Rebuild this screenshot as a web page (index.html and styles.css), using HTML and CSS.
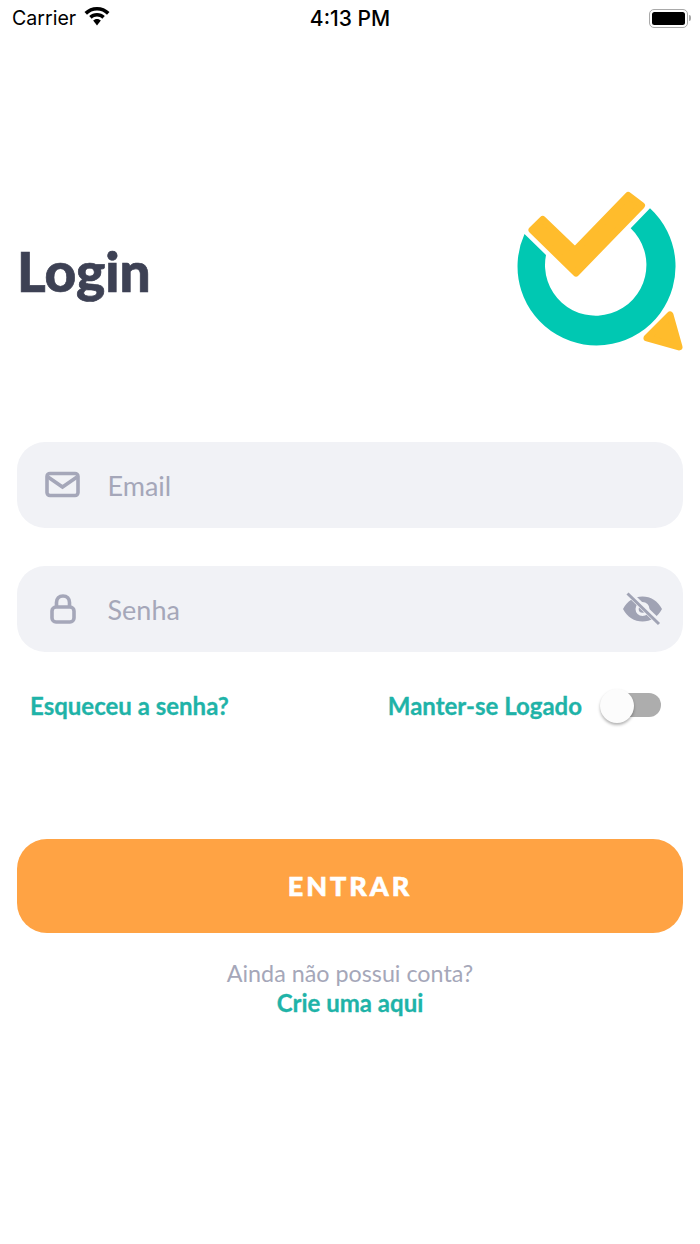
FILE: index.html
```html
<!DOCTYPE html>
<html lang="pt">
<head>
<meta charset="utf-8">
<title>Login</title>
<link rel="stylesheet" href="styles.css">
</head>
<body>
<div class="screen">
  <div class="status">
    <div class="status-left">
      <span>Carrier</span>
      <svg class="wifi" width="26" height="19" viewBox="0 0 26 19"><path d="M13 0C8.200 0 3.800 1.900 .5 5L3 7.700C5.600 5.200 9.100 3.600 13 3.600S20.400 5.200 23 7.700L25.500 5C22.200 1.900 17.800 0 13 0Z"/><path d="M13 6C10 6 7.200 7.200 5.200 9.100L7.700 11.800C9.100 10.500 11 9.600 13 9.600S16.900 10.500 18.300 11.800L20.800 9.100C18.800 7.200 16 6 13 6Z"/><path d="M13 12C11.500 12 10.100 12.600 9.200 13.600L13 18.500L16.800 13.600C15.900 12.600 14.500 12 13 12Z"/></svg>
    </div>
    <div class="status-time">4:13 PM</div>
    <div class="status-right">
      <div class="battery"><div class="battery-fill"></div></div>
      <div class="battery-cap"></div>
    </div>
  </div>

  <header class="head">
    <h1 class="title">Login</h1>
    <svg class="logo" width="200" height="180" viewBox="0 0 200 180">
      <path fill="#00c8b2" d="M150 28.300A79 79 0 1 1 24.500 54L46 75A50.700 50.700 0 1 0 130.700 48.300Z"/>
      <path fill="#ffbc2c" stroke="#ffbc2c" stroke-width="7" stroke-linejoin="round" d="M128.300 15.500L141.500 25.500L76 93L32 50L42.700 39.500L75 70.500Z"/>
      <path fill="#ffbc2c" stroke="#ffbc2c" stroke-width="7" stroke-linejoin="round" d="M170 135L179 167L147 158Z"/>
    </svg>
  </header>

  <form class="form">
    <div class="field">
      <svg class="field-icon" width="36" height="28" viewBox="0 0 36 28" fill="none" stroke="#a5a7b9" stroke-width="3.600"><rect x="2" y="2.500" width="31" height="22" rx="3"/><path d="M3 6L17.500 16L32 6"/></svg>
      <span class="placeholder">Email</span>
    </div>
    <div class="field">
      <svg class="field-icon" width="36" height="32" viewBox="0 0 36 32" fill="none" stroke="#a5a7b9" stroke-width="3.600"><rect x="7" y="14" width="22" height="15" rx="4"/><path d="M11.500 14V9.500C11.500 5.500 14 3 18 3S24.500 5.500 24.500 9.500V14"/></svg>
      <span class="placeholder">Senha</span>
      <svg class="eye" width="40" height="34" viewBox="0 0 40 34"><path fill="#a0a3b4" fill-rule="evenodd" d="M0 17C4 9 11.500 4.500 19.500 4.500S35 9 39 17C35 25 27.500 29.500 19.500 29.500S4 25 0 17ZM19.500 10A7 7 0 1 0 19.500 24A7 7 0 1 0 19.500 10Z"/><circle cx="19.500" cy="17" r="3.800" fill="#a0a3b4"/><path d="M6 1.500L37 31.500" stroke="#f1f2f6" stroke-width="6"/><path d="M4.500 1.500L36 32" stroke="#a0a3b4" stroke-width="3"/></svg>
    </div>
    <div class="options">
      <span class="link">Esqueceu a senha?</span>
      <div class="keep">
        <span class="link">Manter-se Logado</span>
        <div class="switch"><div class="knob"></div></div>
      </div>
    </div>
    <button type="button" class="submit">ENTRAR</button>
    <div class="signup">
      <div class="signup-q">Ainda não possui conta?</div>
      <div class="link signup-link">Crie uma aqui</div>
    </div>
  </form>
</div>
</body>
</html>
```

FILE: styles.css
```css
* { box-sizing: border-box; }
html, body { margin: 0; padding: 0; background: #fff; }
body { font-family: Lato, "Open Sans", sans-serif; }
.screen { width: 700px; height: 1244px; overflow: hidden; }

.status {
  height: 36px;
  padding: 0 12px;
  display: grid;
  grid-template-columns: 1fr auto 1fr;
  align-items: center;
  font-family: Inter, Roboto, sans-serif;
  font-size: 19.600px;
  color: #000;
}
.status-left { display: flex; align-items: center; gap: 9px; }
.wifi { margin-top: -3px; margin-left: -1px; }
.status-time { font-size: 21px; font-weight: 500; }
.status-right { display: flex; justify-content: flex-end; align-items: center; gap: 1px; margin-right: -3px; }
.battery {
  width: 39px; height: 19px;
  border: 1.500px solid #a9a9a9;
  border-radius: 5px;
  padding: 2px;
}
.battery-fill { width: 100%; height: 100%; background: #000; border-radius: 2.500px; }
.battery-cap { width: 2px; height: 6px; background: #a9a9a9; border-radius: 0 2px 2px 0; }

.head {
  height: 180px;
  margin-top: 144px;
  padding-left: 17px;
  display: flex;
  justify-content: space-between;
  align-items: center;
}
.title {
  margin: 0;
  font-size: 55px;
  font-weight: 900;
  color: #3d4154;
  -webkit-text-stroke: .7px #3d4154;
  line-height: 70px;
  position: relative;
  top: 1px;
}
.logo { flex: none; }

.form { margin-top: 82px; padding: 0 17px; }
.field {
  height: 86px;
  margin-bottom: 38px;
  padding: 0 20px 0 28px;
  background: #f1f2f6;
  border-radius: 28px;
  display: flex;
  align-items: center;
}
.field-icon { flex: none; }
.placeholder { margin-left: 26.500px; flex: 1; font-size: 27px; color: #a5a7b9; }
.eye { flex: none; }

.options {
  margin-top: -3px;
  height: 36px;
  padding: 0 22px 0 13px;
  display: flex;
  justify-content: space-between;
  align-items: center;
}
.link { font-size: 24px; font-weight: 700; color: #1fb3a8; -webkit-text-stroke: .3px #1fb3a8; }
.keep { display: flex; align-items: center; gap: 35px; }
.switch {
  position: relative;
  width: 44px; height: 24px;
  background: #adadad;
  border-radius: 12px;
  margin-top: -1px;
}
.knob {
  position: absolute;
  left: -17px; top: -4px;
  width: 34px; height: 34px;
  background: #fcfcfc;
  border-radius: 50%;
  box-shadow: 0 2px 3px rgba(0,0,0,.3);
}
.submit {
  display: block;
  width: 100%;
  height: 94px;
  margin-top: 116px;
  padding-bottom: 3px;
  border: 0;
  border-radius: 30px;
  background: #ffa344;
  color: #fff;
  font-family: inherit;
  font-size: 27px;
  font-weight: 900;
  letter-spacing: 3px;
  -webkit-text-stroke: .6px #fff;
}
.signup { margin-top: 26px; text-align: center; }
.signup-q { font-size: 23.300px; line-height: 29px; color: #a5a7b9; }
.signup-link { line-height: 29px; }
```
